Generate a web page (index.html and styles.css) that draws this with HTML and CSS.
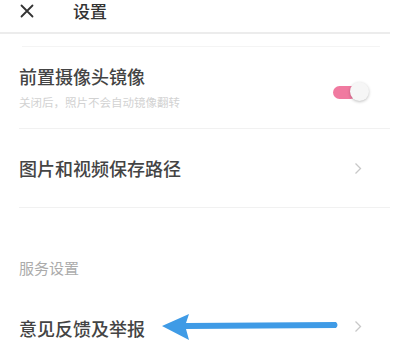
FILE: index.html
```html
<!DOCTYPE html>
<html lang="zh-CN">
<head>
  <meta charset="UTF-8" />
  <meta name="viewport" content="width=device-width, initial-scale=1.0"/>
  <title>设置</title>
  <link rel="stylesheet" href="styles.css">
</head>
<body>

  <div class="topbar">
    <span class="close">
      <svg width="14" height="14" viewBox="0 0 14 14"><path d="M1.5 1.5 L12.5 12.5 M12.5 1.5 L1.5 12.5" stroke="#333" stroke-width="1.8" fill="none" stroke-linecap="round"/></svg>
    </span>
    <span class="title">设置</span>
  </div>
  <div class="faint-line"></div>

  <div class="list">
    <div class="row row-toggle">
      <div class="row-text">
        <div class="label">前置摄像头镜像</div>
        <div class="hint">关闭后，照片不会自动镜像翻转</div>
      </div>
      <div class="switch"><span class="knob"></span></div>
    </div>

    <div class="row row-link">
      <div class="label">图片和视频保存路径</div>
      <span class="chevron">
        <svg width="8" height="13" viewBox="0 0 8 13"><path d="M1.5 1.5 L6.5 6.5 L1.5 11.5" stroke="#c8c8c8" stroke-width="1.3" fill="none"/></svg>
      </span>
    </div>

    <div class="section">服务设置</div>

    <div class="row row-link last">
      <div class="label">意见反馈及举报</div>
      <span class="chevron">
        <svg width="8" height="13" viewBox="0 0 8 13"><path d="M1.5 1.5 L6.5 6.5 L1.5 11.5" stroke="#c8c8c8" stroke-width="1.3" fill="none"/></svg>
      </span>
      <svg class="arrow" width="180" height="30" viewBox="0 0 180 30">
        <path d="M2 13 L29 1 L26 10 L176 9 Q179 12 176 15 L26 16 L29 27 Z" fill="#3f9be6"/>
      </svg>
    </div>
  </div>

</body>
</html>
```

FILE: styles.css
```css
body {
  margin: 0;
  font-family: "Noto Sans CJK SC", "Noto Sans", sans-serif;
  background: #fff;
  color: #444;
  width: 400px;
  height: 340px;
  overflow: hidden;
}

.topbar {
  height: 32px;
  display: flex;
  align-items: flex-start;
  padding-left: 20px;
  border-bottom: 2px solid #ececec;
  margin-right: 10px;
}

.close {
  display: flex;
  margin-top: 4px;
}

.title {
  margin-left: 39px;
  margin-top: 1px;
  font-size: 17px;
  line-height: 19px;
  font-weight: 500;
  color: #333;
}

.faint-line {
  height: 1px;
  background: #f4f4f4;
  margin: 12px 20px 0 22px;
}

.list {
  padding-left: 19px;
  padding-right: 10px;
}

.row {
  display: flex;
  align-items: center;
  justify-content: space-between;
  border-bottom: 1px solid #f1f1f1;
  position: relative;
}

.row-toggle {
  height: 81px;
}

.row-text {
  margin-top: -1px;
}

.label {
  font-size: 18px;
  font-weight: 500;
  color: #444;
  line-height: 24px;
}

.hint {
  font-size: 11.5px;
  color: #d2d2d2;
  margin-top: 6px;
  line-height: 16px;
}

.switch {
  width: 36px;
  height: 20px;
  position: relative;
  margin-right: 21px;
  margin-top: 8px;
}

.switch::before {
  content: "";
  position: absolute;
  left: 0;
  top: 4px;
  width: 24px;
  height: 13px;
  border-radius: 7px;
  background: #f07aa0;
}

.knob {
  position: absolute;
  right: 0;
  top: 0;
  width: 19px;
  height: 19px;
  border-radius: 50%;
  background: #f6f6f6;
  box-shadow: 0 1px 3px rgba(0, 0, 0, 0.25);
}

.row-link {
  height: 78px;
}

.chevron {
  display: flex;
  margin-right: 28px;
}

.section {
  font-size: 15px;
  color: #ababab;
  padding-top: 48px;
  line-height: 24px;
}

.last {
  border-bottom: none;
  height: 64px;
  align-items: flex-end;
}

.last .label {
  margin-bottom: 4px;
}

.last .chevron {
  margin-bottom: 11px;
}

.arrow {
  position: absolute;
  left: 141px;
  bottom: 1px;
}
```
